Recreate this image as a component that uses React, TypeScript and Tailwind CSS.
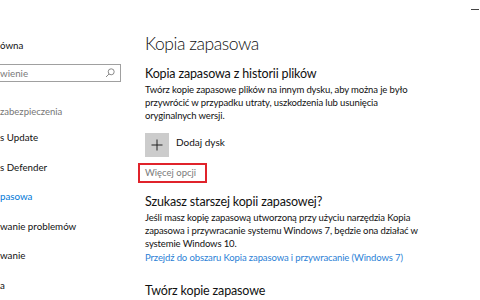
import React from "react";

const font = { fontFamily: "Lato, 'Noto Sans', sans-serif" };

const sideItems = [
  { label: "s Update", active: false },
  { label: "s Defender", active: false },
  { label: "pasowa", active: true },
  { label: "wanie problemów", active: false },
  { label: "wanie", active: false },
  { label: "a", active: false },
];

function SearchIcon() {
  return (
    <svg width="10" height="10" viewBox="0 0 10 10" fill="none" stroke="#8a8a8a" strokeWidth="1">
      <circle cx="6.2" cy="3.8" r="3" />
      <path d="M4 6 L1 9" />
    </svg>
  );
}

export default function App() {
  return (
    <div
      className="flex h-[300px] w-[480px] flex-col overflow-hidden bg-white text-[#111]"
      style={font}
    >
      <div className="flex h-[18px] shrink-0 items-center justify-end pr-[1px]">
        <div className="h-px w-[8px] bg-[#444]" />
      </div>

      <div className="flex flex-1">
        <aside className="w-[145px] shrink-0 text-[9.75px]">
          <div className="mt-[19px] leading-[16px]">ówna</div>
          <div className="mt-[11px] flex h-[18px] w-[121px] items-center justify-between border border-l-0 border-[#a0a0a0] pr-[5px] text-[9.75px] text-[#7a7a7a]">
            <span>wienie</span>
            <SearchIcon />
          </div>
          <div className="mt-[22px] text-[9.5px] leading-[16px] text-[#767676]">zabezpieczenia</div>
          <nav className="mt-[9px] flex flex-col gap-[13.5px]">
            {sideItems.map((item) => (
              <div
                key={item.label}
                className={item.active ? "leading-[16px] text-[#0078d7]" : "leading-[16px]"}
              >
                {item.label}
              </div>
            ))}
          </nav>
        </aside>

        <main className="flex-1 pt-[12px]">
          <h1 className="text-[17.5px] font-light leading-[28px] tracking-[-0.45px]">Kopia zapasowa</h1>

          <h2 className="mt-[7px] text-[12.5px] leading-[18px] tracking-[-0.15px]">
            Kopia zapasowa z historii plików
          </h2>
          <p className="w-[280px] text-[9.5px] leading-[13px] tracking-[-0.12px]">
            Twórz kopie zapasowe plików na innym dysku, aby można je było przywrócić w przypadku
            utraty, uszkodzenia lub usunięcia oryginalnych wersji.
          </p>

          <div className="mt-[11px] flex items-start gap-[7px]">
            <div className="flex h-[24px] w-[24px] items-center justify-center bg-[#cccccc]">
              <svg width="12" height="12" viewBox="0 0 12 12" stroke="#222" strokeWidth="1">
                <path d="M6 0.5 V11.5 M0.5 6 H11.5" />
              </svg>
            </div>
            <span className="mt-[1px] text-[10px] leading-[16px]">Dodaj dysk</span>
          </div>

          <div className="ml-[-7px] mt-[6px] flex h-[20px] w-[69px] items-center border-2 border-[#e0232b] pl-[5px] text-[9.5px] text-[#7a7a7a]">
            Więcej opcji
          </div>

          <h2 className="mt-[10px] text-[12.5px] leading-[18px] tracking-[-0.15px]">
            Szukasz starszej kopii zapasowej?
          </h2>
          <p className="w-[280px] text-[9.5px] leading-[13px] tracking-[-0.12px]">
            Jeśli masz kopię zapasową utworzoną przy użyciu narzędzia Kopia zapasowa i
            przywracanie systemu Windows 7, będzie ona działać w systemie Windows 10.
          </p>
          <a className="mt-[1px] block text-[9.5px] leading-[14px] tracking-[-0.12px] text-[#2b7fd6]">
            Przejdź do obszaru Kopia zapasowa i przywracanie (Windows 7)
          </a>

          <h2 className="mt-[16px] text-[12.5px] leading-[20px] tracking-[-0.15px]">
            Twórz kopie zapasowe
          </h2>
        </main>
      </div>
    </div>
  );
}
